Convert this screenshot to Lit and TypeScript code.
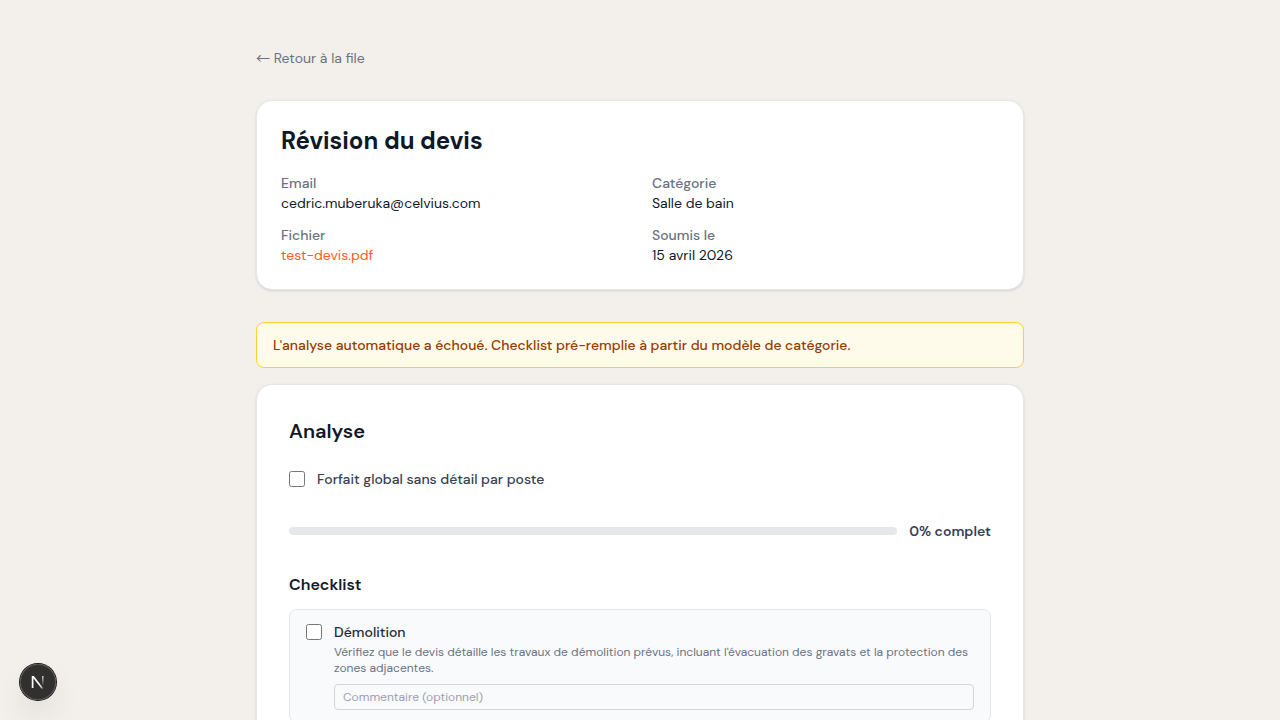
import { LitElement, html, css } from "lit";
import { customElement, state } from "lit/decorators.js";

interface ChecklistItem {
  id: string;
  title: string;
  description: string;
  done: boolean;
}

@customElement("app-root")
export class AppRoot extends LitElement {
  static styles = css`
    :host {
      display: block;
      min-height: 100vh;
      background: #f3f0eb;
      color: #101828;
      font-family: "DM Sans", Inter, "Open Sans", sans-serif;
      font-size: 14px;
      line-height: 20px;
      -webkit-font-smoothing: antialiased;
    }
    *,
    *::before,
    *::after {
      box-sizing: border-box;
    }
    h1,
    h2,
    h3,
    p,
    dl,
    dd,
    ul {
      margin: 0;
      padding: 0;
    }
    .page {
      max-width: 768px;
      margin: 0 auto;
      padding: 48px 0;
      display: flex;
      flex-direction: column;
    }
    .back {
      align-self: flex-start;
      margin-bottom: 32px;
      color: #6a7282;
      text-decoration: none;
    }
    .arrow {
      font-family: "Noto Sans CJK JP", sans-serif;
      line-height: 1;
    }
    .card {
      padding: 24px;
      background: #fff;
      border: 1px solid #e5e7eb;
      border-radius: 16px;
      box-shadow: 0 1px 3px rgb(0 0 0 / 0.1), 0 1px 2px -1px rgb(0 0 0 / 0.1);
    }
    .analysis {
      padding: 32px;
    }
    .title {
      font-size: 24px;
      line-height: 32px;
      font-weight: 700;
    }
    .facts {
      display: grid;
      grid-template-columns: 1fr 1fr;
      gap: 12px 24px;
      margin-top: 16px;
    }
    .term {
      font-weight: 500;
      color: #6a7282;
    }
    .file {
      color: #ff5a2a;
      text-decoration: none;
    }
    .alert {
      margin: 32px 0 16px;
      padding: 12px 16px;
      border: 1px solid #ffd230;
      border-radius: 8px;
      background: #fffbeb;
      color: #973c00;
      font-weight: 500;
    }
    .heading {
      font-size: 20px;
      line-height: 28px;
      font-weight: 600;
    }
    .check {
      flex: none;
      width: 16px;
      height: 16px;
      margin: 0;
    }
    .flat {
      display: flex;
      align-items: center;
      gap: 12px;
      margin-top: 24px;
      color: #364153;
      font-weight: 500;
    }
    .progress {
      display: flex;
      align-items: center;
      gap: 12px;
      margin-top: 32px;
      color: #364153;
      font-weight: 600;
    }
    .track {
      flex: 1;
      height: 8px;
      border-radius: 4px;
      background: #e5e7eb;
      overflow: hidden;
    }
    .fill {
      height: 100%;
      background: #ff5a2a;
    }
    .subheading {
      margin-top: 32px;
      font-size: 16px;
      line-height: 24px;
      font-weight: 600;
    }
    .items {
      display: flex;
      flex-direction: column;
      gap: 12px;
      margin-top: 12px;
      list-style: none;
    }
    .item {
      display: flex;
      align-items: flex-start;
      gap: 12px;
      padding: 12px 16px;
      border: 1px solid #e5e7eb;
      border-radius: 8px;
      background: #f9fafb;
    }
    .item .check {
      margin-top: 2px;
    }
    .body {
      flex: 1;
      min-width: 0;
      display: flex;
      flex-direction: column;
    }
    .name {
      color: #1e2939;
      font-weight: 500;
    }
    .hint {
      margin-top: 2px;
      font-size: 12px;
      line-height: 16px;
      color: #6a7282;
    }
    .comment {
      width: 100%;
      margin-top: 8px;
      padding: 4px 8px;
      border: 1px solid #d1d5dc;
      border-radius: 4px;
      background: transparent;
      color: inherit;
      font: inherit;
      font-size: 12px;
      line-height: 16px;
    }
    .comment::placeholder {
      color: #99a1af;
    }
    .badge {
      position: fixed;
      left: 20px;
      bottom: 20px;
      width: 36px;
      height: 36px;
      padding: 0;
      border: 0;
      border-radius: 50%;
      background: rgb(0 0 0 / 0.8);
      box-shadow: 0 0 0 1px #171717, inset 0 0 0 1px rgb(255 255 255 / 0.14),
        0 16px 32px -8px rgb(0 0 0 / 0.24);
      display: flex;
      align-items: center;
      justify-content: center;
    }
    .logo {
      display: block;
      flex: none;
    }
  `;

  @state() private flatRate = false;

  @state() private items: ChecklistItem[] = [
    {
      id: "demolition",
      title: "Démolition",
      description:
        "Vérifiez que le devis détaille les travaux de démolition prévus, incluant l'évacuation des gravats et la protection des zones adjacentes.",
      done: false,
    },
  ];

  private get percent() {
    return Math.round((this.items.filter((i) => i.done).length / this.items.length) * 100);
  }

  private toggle(id: string) {
    this.items = this.items.map((i) => (i.id === id ? { ...i, done: !i.done } : i));
  }

  render() {
    return html`
      <main class="page">
        <a class="back" href="#"><span class="arrow">←</span> Retour à la file</a>

        <section class="card">
          <h1 class="title">Révision du devis</h1>
          <dl class="facts">
            <div><dt class="term">Email</dt><dd>cedric.muberuka@celvius.com</dd></div>
            <div><dt class="term">Catégorie</dt><dd>Salle de bain</dd></div>
            <div><dt class="term">Fichier</dt><dd><a class="file" href="#">test-devis.pdf</a></dd></div>
            <div><dt class="term">Soumis le</dt><dd>15 avril 2026</dd></div>
          </dl>
        </section>

        <p class="alert" role="alert">L'analyse automatique a échoué. Checklist pré-remplie à partir du modèle de catégorie.</p>

        <section class="card analysis">
          <h2 class="heading">Analyse</h2>
          <label class="flat">
            <input
              class="check"
              type="checkbox"
              .checked=${this.flatRate}
              @change=${() => (this.flatRate = !this.flatRate)}
            />
            <span>Forfait global sans détail par poste</span>
          </label>
          <div class="progress">
            <div class="track"><div class="fill" style="width:${this.percent}%"></div></div>
            <span>${this.percent}% complet</span>
          </div>
          <h3 class="subheading">Checklist</h3>
          <ul class="items">
            ${this.items.map(
              (item) => html`
                <li class="item">
                  <input
                    class="check"
                    type="checkbox"
                    id=${item.id}
                    .checked=${item.done}
                    @change=${() => this.toggle(item.id)}
                  />
                  <div class="body">
                    <label class="name" for=${item.id}>${item.title}</label>
                    <p class="hint">${item.description}</p>
                    <input
                      class="comment"
                      type="text"
                      placeholder="Commentaire (optionnel)"
                      aria-label="Commentaire (optionnel)"
                    />
                  </div>
                </li>
              `
            )}
          </ul>
        </section>
      </main>

      <button class="badge" type="button" aria-label="Next.js">
        <svg class="logo" width="40" height="40" viewBox="0 0 40 40" fill="none" aria-hidden="true">
          <defs>
            <linearGradient id="diag" x1="22" y1="21" x2="26" y2="27" gradientUnits="userSpaceOnUse">
              <stop stop-color="#fff" />
              <stop offset="0.6" stop-color="#fff" stop-opacity="0.7" />
              <stop offset="1" stop-color="#fff" stop-opacity="0" />
            </linearGradient>
            <linearGradient id="stem" x1="25" y1="14" x2="25" y2="24" gradientUnits="userSpaceOnUse">
              <stop stop-color="#fff" stop-opacity="0.8" />
              <stop offset="1" stop-color="#fff" stop-opacity="0" />
            </linearGradient>
          </defs>
          <path d="M14.6 26V14.8H15.4L24.6 26.8" stroke="url(#diag)" stroke-width="1.7" />
          <path d="M24.8 14V23" stroke="url(#stem)" stroke-width="1.5" />
        </svg>
      </button>
    `;
  }
}
